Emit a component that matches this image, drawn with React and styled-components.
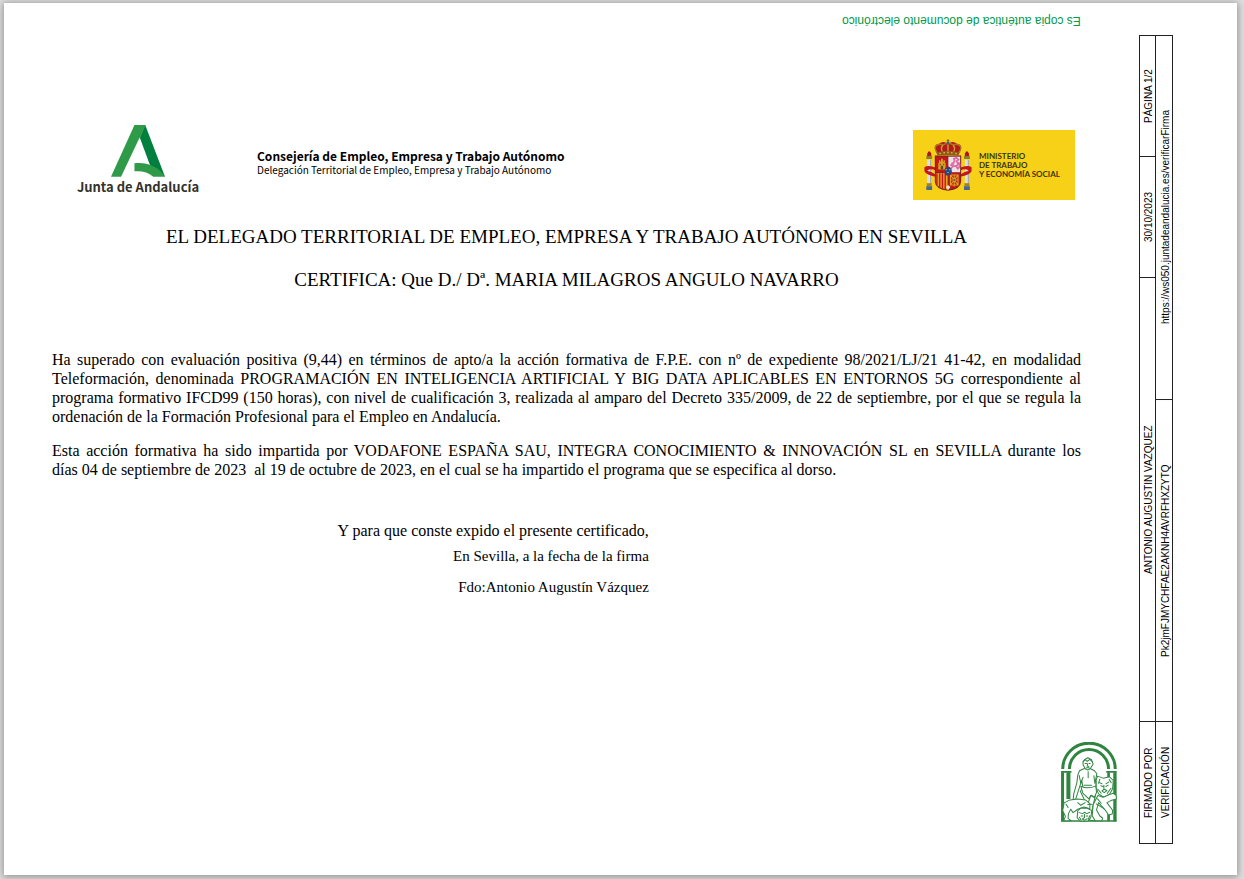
import React from "react";
import styled, { createGlobalStyle } from "styled-components";

const GlobalStyle = createGlobalStyle`
  body {
    margin: 0;
    background: #dedede;
    color: #000;
    font-family: "Liberation Serif", "Times New Roman", serif;
  }
`;

const Sheet = styled.div`
  display: flex;
  box-sizing: border-box;
  min-height: calc(100vh - 8px);
  margin: 3px 7px 5px 4px;
  background: #fff;
  box-shadow: 0 1px 7px 1px rgba(0, 0, 0, 0.34);
`;

const Main = styled.main`
  flex: 1;
  min-width: 0;
  display: flex;
  flex-direction: column;
  padding: 11px 58px 53px 48px;
`;

const CopyNotice = styled.p`
  align-self: flex-end;
  margin: 0;
  font: 12px/14px "Liberation Sans", Arial, sans-serif;
  color: #009a4d;
  transform: rotate(180deg);
`;

const Header = styled.header`
  display: flex;
  align-items: flex-start;
  margin-top: 97px;
  padding: 0 6px 0 26px;
`;

const JuntaLogo = styled.div`
  display: flex;
  flex-direction: column;
  align-items: center;
  width: 120px;
  svg {
    display: block;
  }
`;

const JuntaName = styled.span`
  font: 700 13px/20px "Noto Sans CJK SC", "Noto Sans", sans-serif;
  color: #33322b;
  white-space: nowrap;
`;

const Office = styled.div`
  flex: 1;
  margin: 23px 0 0 59px;
  font: 10px/14px "Noto Sans CJK SC", "Noto Sans", sans-serif;
`;

const OfficeName = styled.strong`
  display: block;
  font-size: 12px;
  line-height: 15px;
`;

const Ministry = styled.div`
  display: flex;
  align-items: center;
  gap: 7px;
  box-sizing: border-box;
  width: 162px;
  height: 70px;
  margin-top: 5px;
  padding-left: 11px;
  background: #f7d117;
  color: #3a3312;
  font: 700 8px/9px Lato, "Open Sans", sans-serif;
  white-space: nowrap;
`;

const Title = styled.h1`
  margin: 26px 0 0;
  font-size: 19px;
  font-weight: 400;
  line-height: 22px;
  text-align: center;
`;

const Certifies = styled.h2`
  margin: 21px 0 0;
  font-size: 19px;
  font-weight: 400;
  line-height: 22px;
  text-align: center;
`;

const Body = styled.div`
  margin-top: 59px;
`;

const Paragraph = styled.p`
  margin: 0 0 15px;
  font-size: 16px;
  line-height: 19px;
  text-align: justify;
`;

const Closing = styled.div`
  width: 58%;
  margin-top: 28px;
  text-align: right;
`;

const ClosingLine = styled.p`
  margin: ${(p) => p.$before}px 0 0;
  font-size: ${(p) => (p.$lead ? 16 : 15)}px;
  line-height: 18px;
`;

const EmblemRow = styled.div`
  display: flex;
  justify-content: flex-end;
  margin-top: auto;
  margin-right: -36px;
`;

const Aside = styled.aside`
  flex: none;
  padding: 32px 64px 31px 0;
  display: flex;
`;

const SignatureTable = styled.table`
  writing-mode: vertical-rl;
  transform: rotate(180deg);
  table-layout: fixed;
  inline-size: 808px;
  block-size: 34px;
  border-collapse: collapse;
  font: 10px/13px "Liberation Sans", Arial, sans-serif;
`;

const Col = styled.col`
  inline-size: ${(p) => p.$size}px;
`;

const Cell = styled.td`
  padding: 0;
  padding-block-start: 2px;
  border: 1px solid #222;
  text-align: center;
  white-space: nowrap;
`;

const LabelCell = styled(Cell).attrs({ as: "th", scope: "row" })`
  font-weight: 400;
`;

function AndalusianA() {
  return (
    <svg width="54" height="52" viewBox="152 46 161 155" aria-hidden="true">
      <path d="M222 46H255L182 200H152Z" fill="#2f9a48" />
      <path d="M254 46L313 200L272 176L238 84Z" fill="#007f3e" />
      <path d="M222 46H254L238 86Z" fill="#2f9a48" />
      <path d="M222 160C258 156 294 169 313 200H278C263 187 244 182 222 184Z" fill="#2f9a48" />
    </svg>
  );
}

function Pillar({ x }) {
  return (
    <g transform={`translate(${x} 0)`}>
      <path d="M2 22H12V18L9 15H5L2 18Z" fill="#ad1519" />
      <path d="M0 21H14V25H0Z" fill="#8d7f2c" />
      <path d="M2 26H12V58H2Z" fill="#dedede" />
      <path d="M9 26H12V58H9Z" fill="#aaa" />
      <path d="M1 57H13V61H1Z" fill="#a2851b" />
      <path d="M0 61H14V66H0Z" fill="#47698f" />
    </g>
  );
}

function CoatOfArms() {
  return (
    <svg width="48" height="52" viewBox="0 0 138 150" aria-hidden="true">
      <g transform="scale(1 1.02)">
        <g transform="translate(4 3) scale(1.2 2.14)">
          <Pillar x={2} />
        </g>
        <g transform="translate(114 3) scale(1.2 2.14)">
          <Pillar x={1} />
        </g>
        <path d="M1 80Q12 72 36 82V89Q14 81 9 90Q20 92 34 101V107Q6 101 1 91Z" fill="#c4161c" />
        <path d="M137 80Q126 72 102 82V89Q124 81 129 90Q118 92 104 101V107Q132 101 137 91Z" fill="#c4161c" />
        <path d="M31 47H107V121Q105 143 69 146Q33 143 31 121Z" fill="#7d2220" />
        <path d="M34 50H68V94H34Z" fill="#c4161c" />
        <path d="M70 50H104V94H70Z" fill="#ece3e5" />
        <path d="M34 96H68V143Q36 139 34 121Z" fill="#e8a41d" />
        <path d="M70 96H104V121Q102 139 70 143Z" fill="#c4161c" />
        <path d="M37 97V130M45 97V137M53 97V141M61 97V143" stroke="#c4161c" strokeWidth="4" />
        <path d="M41 86V68H43V60H47V64H49V56H54V64H56V60H60V68H62V86Z" fill="#d9a51e" />
        <path d="M48 86V77Q51 73 55 77V86ZM45 70H48V74H45ZM55 70H58V74H55Z" fill="#5b4a22" />
        <path
          d="M76 85L83 77L79 72L76 75M79 68L84 70L88 60L86 56L93 53L99 58L94 63L98 71L93 77L98 86M83 77L92 76M98 84Q106 75 99 65"
          fill="none"
          stroke="#df6ba5"
          strokeWidth="5"
        />
        <path
          d="M76 102H98V130H76ZM76 102L98 130M98 102L76 130M87 102V134M76 116H98"
          fill="none"
          stroke="#dea51f"
          strokeWidth="3"
        />
        <circle cx="87" cy="116" r="3" fill="#39733d" />
        <path d="M63 136L69 130L76 136L69 145Z" fill="#e8dfd7" />
        <ellipse cx="69" cy="91" rx="11" ry="13" fill="#a6232a" />
        <ellipse cx="69" cy="91" rx="9" ry="11" fill="#164b99" />
        <path d="M62 87H66M72 87H76M67 95H71" stroke="#d8b83c" strokeWidth="3" />
        <path d="M39 44L32 28Q28 16 42 14Q55 4 69 13Q83 4 96 14Q110 16 106 28L99 44Z" fill="#b41a1b" />
        <path
          d="M39 41Q28 26 34 20Q42 11 56 17Q65 10 69 14Q75 10 83 17Q96 11 104 20Q110 26 99 41"
          fill="none"
          stroke="#a9781e"
          strokeWidth="4"
        />
        <path d="M54 38Q46 25 54 18M69 38V15M84 38Q92 25 84 18" fill="none" stroke="#d79b23" strokeWidth="4" />
        <path d="M36 38Q69 29 102 38L99 47Q69 42 39 47Z" fill="#8b5a1c" />
        <path d="M44 41H48M56 39H60M67 38H71M78 39H82M90 41H94" stroke="#e2bd3b" strokeWidth="4" />
        <path d="M69 1V13M65 5H73" stroke="#72551c" strokeWidth="3" />
        <circle cx="69" cy="12" r="4" fill="#3c5d93" />
      </g>
    </svg>
  );
}

function HerculesEmblem() {
  return (
    <svg width="56" height="80" viewBox="62 65 167 239" role="img" aria-label="Escudo de Andalucía">
      <g fill="none" stroke="#2f8540">
        <path d="M67 146A78 77 0 0 1 224 146" strokeWidth="9" />
        <path d="M87 146A58 58 0 0 1 204 146" strokeWidth="9" />
      </g>
      <g fill="#2f8540">
        <path d="M62 152H93V157H62ZM197 152H228V157H197Z" />
        <path d="M62 155H71V302H62ZM78 155H90V235H78ZM200 155H208V172H200ZM218 155H228V302H218Z" />
        <path d="M200 281H208V302H200ZM62 299H228V303H62Z" />
      </g>
      <g fill="#fff" stroke="#2f8540" strokeWidth="3" strokeLinejoin="round">
        <path d="M130 145L117 151L112 164L109 188L100 220L98 238L106 235L119 194L124 180L127 199L120 213L131 236L146 260L148 299L165 300L159 270L158 244L164 229L167 196L165 179L169 160L162 151L150 145Z" />
        <path d="M132 118Q124 128 130 137L134 144L142 149L151 142L158 131L153 118L142 112Z" />
        <path d="M121 197Q142 207 166 196L168 216L162 229L151 224L145 235L127 218Z" />
        <path d="M151 225L143 247L134 261L130 283L124 299L145 297L155 266L163 232Z" />
        <path d="M167 178L171 167L188 173L207 169L218 180L216 205L207 221L190 230L174 220L167 202Z" />
        <path d="M205 223L217 218L227 225V235L211 240L199 246L216 269L215 280L204 283L196 271L174 246L168 268L178 286L186 292L184 300H164L155 285L158 252L172 225L188 230Z" />
        <path d="M67 270L71 247L89 238L112 235L135 238L148 249V264L130 259L112 266L98 276L91 266L84 279L83 293L92 300H70L75 287Z" />
        <path d="M112 270L121 263L140 263L154 270L151 290L143 301H119L110 291Z" />
      </g>
      <g fill="none" stroke="#2f8540" strokeWidth="3" strokeLinecap="round" strokeLinejoin="round">
        <path d="M128 123L135 118L140 123L148 117L155 124M134 129H138M146 129H149M142 129L140 137L145 138M138 142H146" />
        <path d="M124 180L128 170M143 154V172M116 165L121 188M160 166L163 188M131 194H153" />
        <path d="M176 186L185 190M196 190L205 184M181 196L187 198M196 198L203 194M190 194V207L184 211L191 216L199 210L192 207M172 206L182 218M211 203L200 219M178 176L174 188M206 177L212 187" />
        <path d="M116 276L126 279L132 275L139 279L148 275M122 286H127M137 286H142M132 281V291L126 295L132 299L140 294M117 290L122 299M148 285L143 297" />
        <path d="M77 251L83 261M112 246L121 254L134 246M142 252L155 251M171 235L182 248M167 250L190 264" />
      </g>
    </svg>
  );
}

export default function App() {
  return (
    <>
      <GlobalStyle />
      <Sheet>
        <Main>
          <CopyNotice>Es copia auténtica de documento electrónico</CopyNotice>
          <Header>
            <JuntaLogo>
              <AndalusianA />
              <JuntaName>Junta de Andalucía</JuntaName>
            </JuntaLogo>
            <Office>
              <OfficeName>Consejería de Empleo, Empresa y Trabajo Autónomo</OfficeName>
              Delegación Territorial de Empleo, Empresa y Trabajo Autónomo
            </Office>
            <Ministry>
              <CoatOfArms />
              <span>
                MINISTERIO
                <br />
                DE TRABAJO
                <br />Y ECONOMÍA SOCIAL
              </span>
            </Ministry>
          </Header>
          <Title>EL DELEGADO TERRITORIAL DE EMPLEO, EMPRESA Y TRABAJO AUTÓNOMO EN SEVILLA</Title>
          <Certifies>CERTIFICA: Que D./ Dª. MARIA MILAGROS ANGULO NAVARRO</Certifies>
          <Body>
            <Paragraph>
              Ha superado con evaluación positiva (9,44) en términos de apto/a la acción formativa de F.P.E. con nº de
              expediente 98/2021/LJ/21 41-42, en modalidad Teleformación, denominada PROGRAMACIÓN EN INTELIGENCIA
              ARTIFICIAL Y BIG DATA APLICABLES EN ENTORNOS 5G correspondiente al programa formativo IFCD99 (150 horas),
              con nivel de cualificación 3, realizada al amparo del Decreto 335/2009, de 22 de septiembre, por el que se
              regula la ordenación de la Formación Profesional para el Empleo en Andalucía.
            </Paragraph>
            <Paragraph>
              Esta acción formativa ha sido impartida por VODAFONE ESPAÑA SAU, INTEGRA CONOCIMIENTO &amp; INNOVACIÓN SL
              en SEVILLA durante los días&nbsp;04 de septiembre de 2023&nbsp; al 19 de octubre de 2023, en el cual se ha
              impartido el programa que se especifica al dorso.
            </Paragraph>
          </Body>
          <Closing>
            <ClosingLine $lead $before={0}>
              Y para que conste expido el presente certificado,
            </ClosingLine>
            <ClosingLine $before={7}>En Sevilla, a la fecha de la firma</ClosingLine>
            <ClosingLine $before={13}>Fdo:Antonio Augustín Vázquez</ClosingLine>
          </Closing>
          <EmblemRow>
            <HerculesEmblem />
          </EmblemRow>
        </Main>
        <Aside>
          <SignatureTable>
            <colgroup>
              <Col $size={122} />
              <Col $size={322} />
              <Col $size={122} />
              <Col $size={121} />
              <Col $size={121} />
            </colgroup>
            <tbody>
              <tr>
                <LabelCell>FIRMADO POR</LabelCell>
                <Cell colSpan={2}>ANTONIO AUGUSTIN VAZQUEZ</Cell>
                <Cell>30/10/2023</Cell>
                <Cell>PÁGINA 1/2</Cell>
              </tr>
              <tr>
                <LabelCell>VERIFICACIÓN</LabelCell>
                <Cell>Pk2jmFJMYCHFAE2AKNH4AVRFHXZYTQ</Cell>
                <Cell colSpan={3}>https://ws050.juntadeandalucia.es/verificarFirma</Cell>
              </tr>
            </tbody>
          </SignatureTable>
        </Aside>
      </Sheet>
    </>
  );
}
